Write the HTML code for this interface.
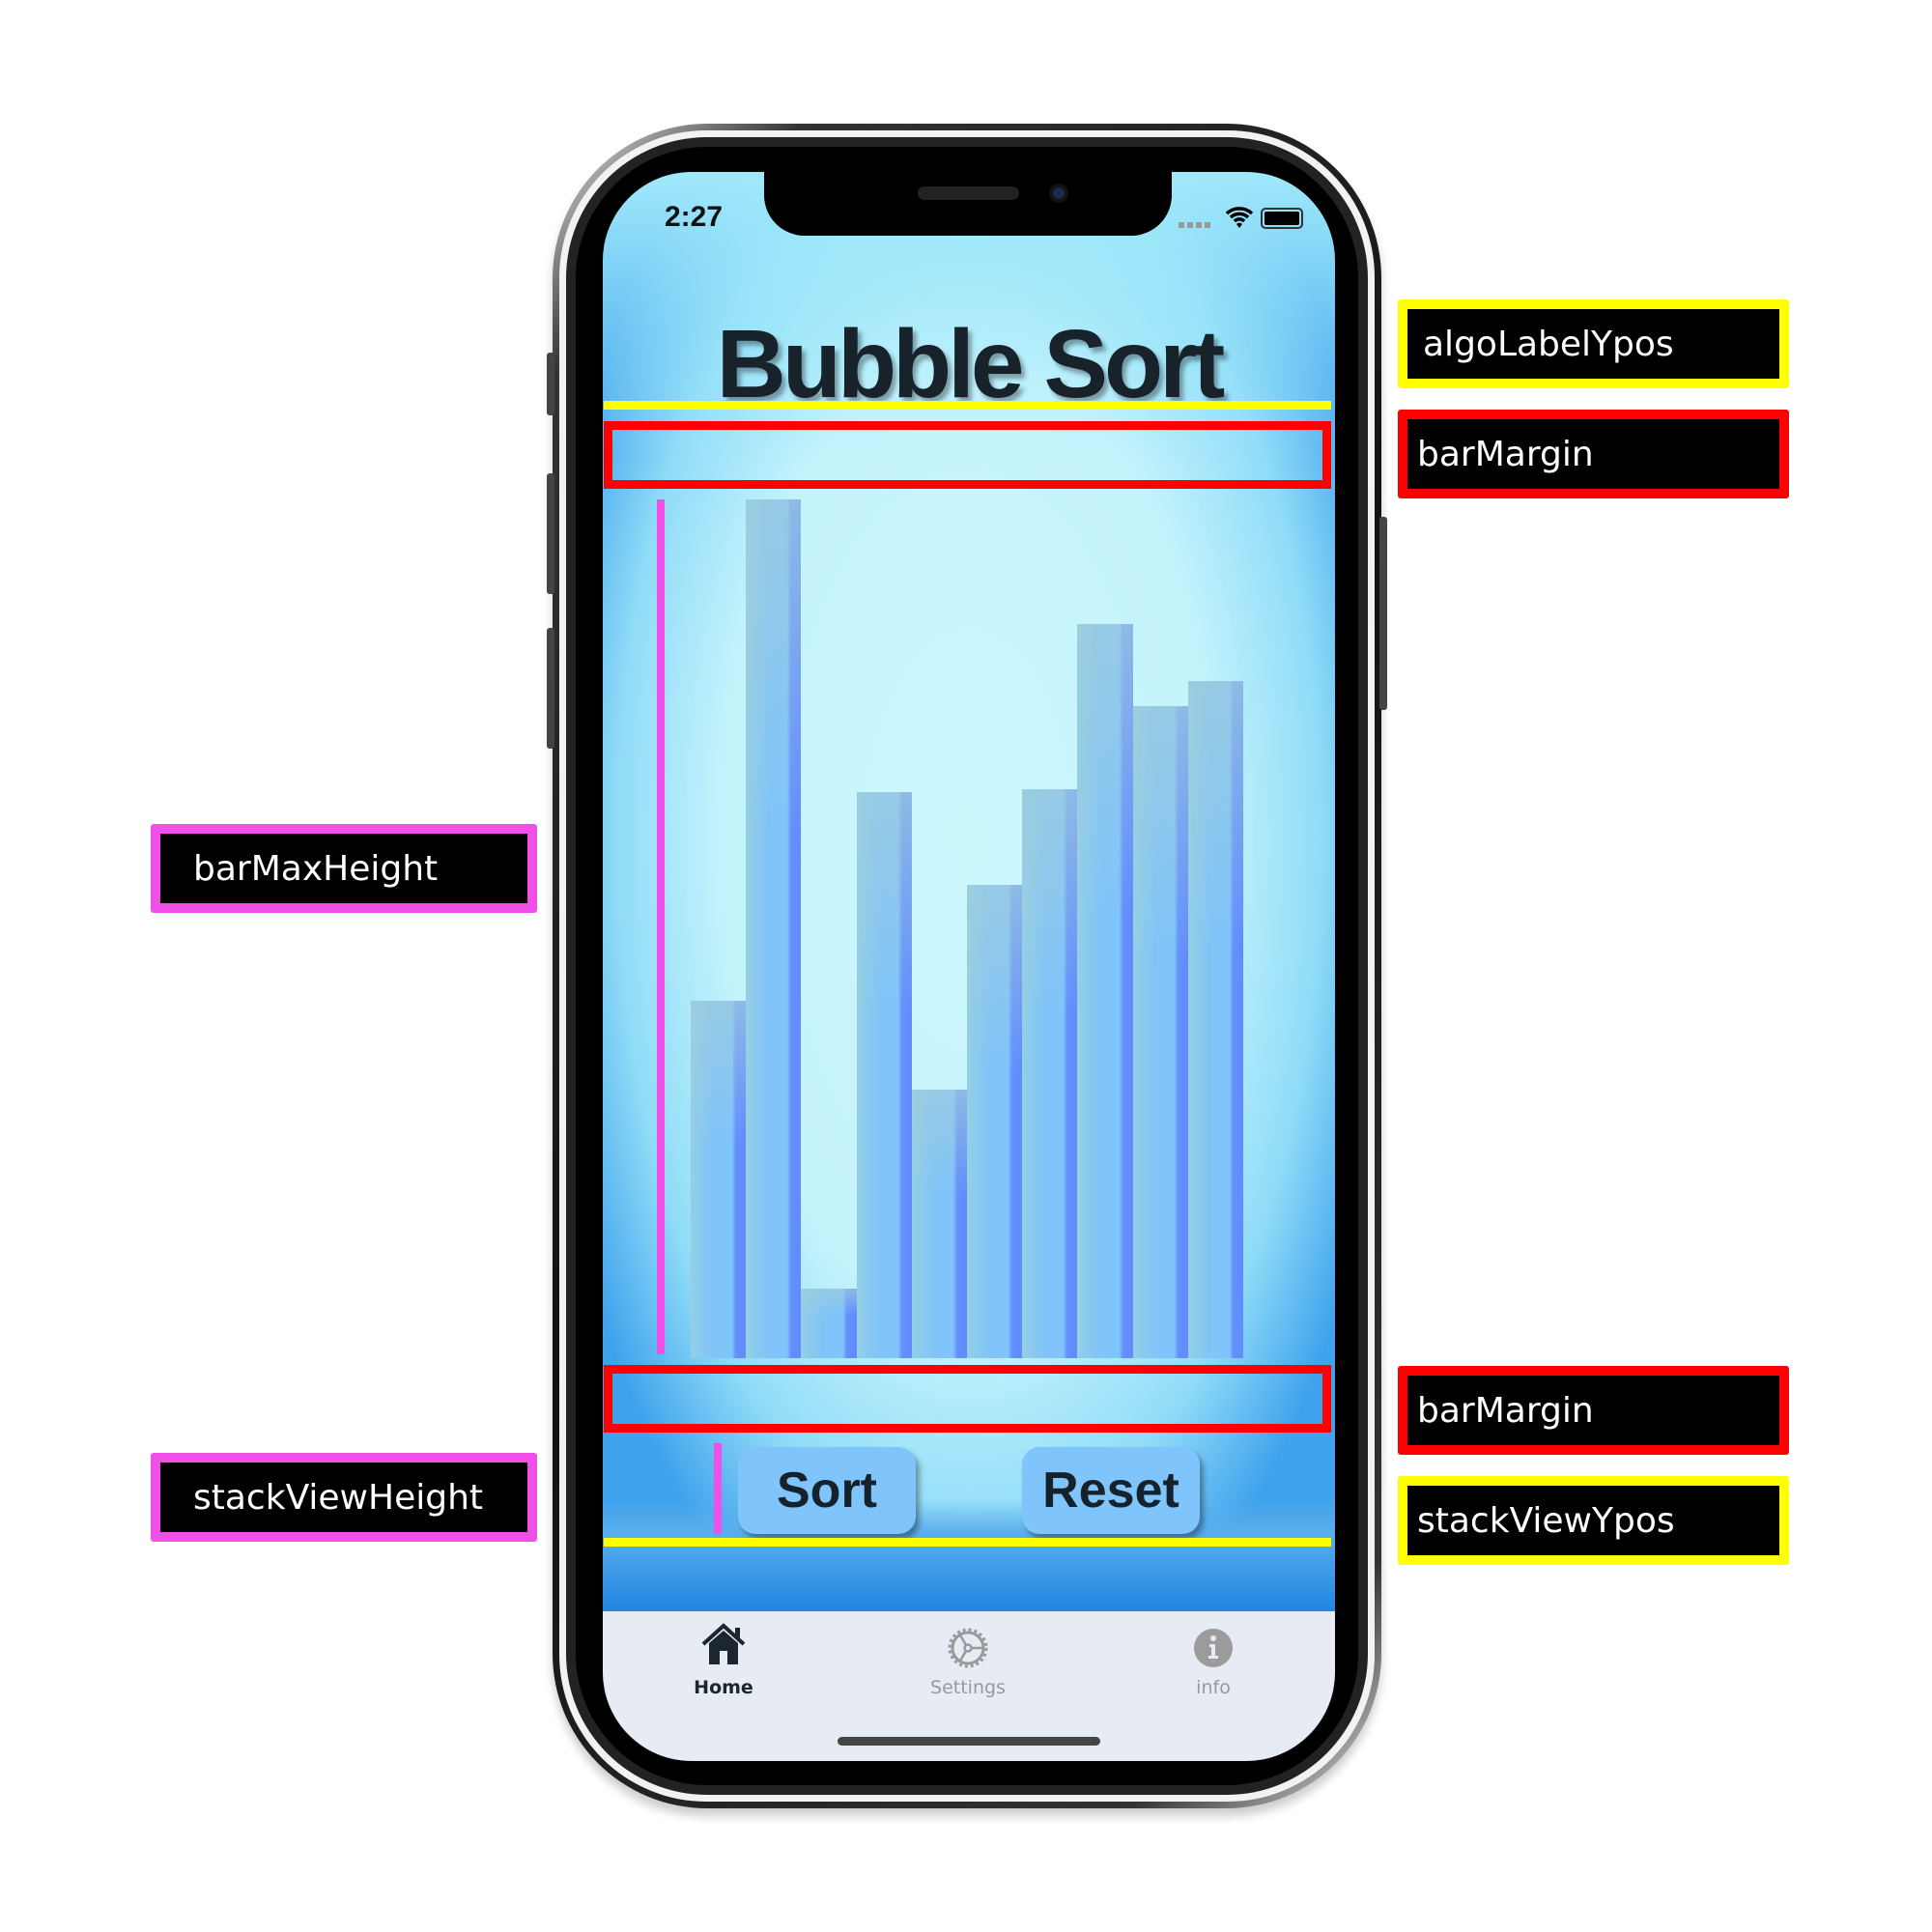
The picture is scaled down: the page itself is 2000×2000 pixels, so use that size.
<!DOCTYPE html>
<html><head><meta charset="utf-8"><style>
*{margin:0;padding:0;box-sizing:border-box}
body{width:2000px;height:2000px;background:#fff;position:relative;overflow:hidden;font-family:"Liberation Sans",sans-serif}
.a{position:absolute}
.lbl{position:absolute;background:#000;color:#fff;font-family:"DejaVu Sans","Liberation Sans",sans-serif;font-size:36px;border:10px solid;padding-left:16px;display:flex;align-items:center;border-radius:3px}
.bar{position:absolute;bottom:0;width:57.2px;background:linear-gradient(90deg,#94cfe4 0%,#80c4f8 40%,#7fc4fb 75%,#6590fd 82%,#5f8bfd 100%)}
.bar::before{content:"";position:absolute;left:0;right:0;top:0;height:40%;background:linear-gradient(180deg,rgba(160,205,220,.7),rgba(160,205,220,0))}
.btn{position:absolute;top:1498px;width:184px;height:90px;background:#7fc4fb;border-radius:18px;box-shadow:4px 5px 6px rgba(0,0,0,.35);font-size:52px;font-weight:bold;color:#15222c;display:flex;align-items:center;justify-content:center}
.tab{position:absolute;top:1736px;font-size:19px;font-family:"DejaVu Sans",sans-serif;transform:translateX(-50%)}
</style></head><body>
<div class="a" style="left:572px;top:128px;width:858px;height:1744px;border-radius:160px;background:linear-gradient(135deg,#e8e8e8,#333 10%,#111 50%,#333 90%,#ddd);box-shadow:0 8px 10px rgba(0,0,0,.2)"></div>
<div class="a" style="left:579px;top:135px;width:844px;height:1730px;border-radius:152px;background:#f2f2f2"></div>
<div class="a" style="left:586px;top:142px;width:830px;height:1716px;border-radius:146px;background:#222"></div>
<div class="a" style="left:596px;top:152px;width:810px;height:1696px;border-radius:136px;background:#000"></div>
<div class="a" style="left:566px;top:365px;width:8px;height:65px;background:#444;border-radius:3px"></div>
<div class="a" style="left:566px;top:490px;width:8px;height:125px;background:#444;border-radius:3px"></div>
<div class="a" style="left:566px;top:650px;width:8px;height:125px;background:#444;border-radius:3px"></div>
<div class="a" style="left:1428px;top:535px;width:8px;height:200px;background:#444;border-radius:3px"></div>
<div class="a" style="left:624px;top:178px;width:758px;height:1645px;border-radius:92px;overflow:hidden;background:radial-gradient(ellipse 60% 55% at 50% 42%,#ccf7fd 0%,#c6f4fc 55%,#90dcf8 80%,#3fa2ec 100%)">
  <div class="a" style="left:0;top:0;width:758px;height:300px;background:linear-gradient(180deg,#a0e9fb,rgba(190,243,252,0))"></div>
  <div class="a" style="left:0;top:1375px;width:758px;height:115px;background:linear-gradient(180deg,rgba(30,136,229,0),#5aaeed 30%,#2185e0 100%)"></div>
  <div class="a" style="left:0;top:1490px;width:758px;height:160px;background:#e7ebf3"></div>
  <div class="a" style="left:243px;top:1620px;width:272px;height:9px;border-radius:5px;background:#444"></div>
</div>
<div class="a" style="left:791px;top:168px;width:422px;height:76px;background:#000;border-radius:0 0 42px 42px"></div>
<div class="a" style="left:950px;top:193px;width:105px;height:14px;background:#222;border-radius:7px"></div>
<div class="a" style="left:1086px;top:190px;width:20px;height:20px;background:#1a2c4a;border-radius:50%;border:4px solid #111"></div>
<div class="a" style="left:688px;top:208px;font-size:30px;font-weight:bold;color:#111">2:27</div>
<div class="a" style="left:1220px;top:230px;width:36px;height:6px;background:repeating-linear-gradient(90deg,#999 0 6px,transparent 6px 9px)"></div>
<svg class="a" style="left:1268px;top:212px" width="30" height="26" viewBox="0 0 30 26"><path d="M2 9a19 19 0 0 1 26 0M6 13a13 13 0 0 1 18 0M10 17a7 7 0 0 1 10 0" stroke="#000" stroke-width="3.5" fill="none"/><path d="M12 20l3 4 3-4a4 4 0 0 0-6 0z" fill="#000"/></svg>
<div class="a" style="left:1305px;top:215px;width:44px;height:22px;border:2px solid #333;border-radius:5px;padding:2px"><div style="width:100%;height:100%;background:#000;border-radius:2px"></div></div>
<div class="a" style="left:624px;top:320px;width:758px;text-align:center;font-size:100px;font-weight:bold;color:#17222b;letter-spacing:-4px;text-shadow:4px 5px 5px rgba(0,0,0,.35)">Bubble Sort</div>
<div class="a" style="left:625px;top:415px;width:753px;height:9px;background:#ff0"></div>
<div class="a" style="left:625px;top:436px;width:753px;height:70px;border:9px solid #f00"></div>
<div class="a" style="left:680px;top:517px;width:8px;height:885px;background:#f050e8"></div>
<div class="a" style="left:715px;top:0;width:580px;height:1406px">
 <div class="bar" style="left:0;height:370px"></div>
 <div class="bar" style="left:57.2px;height:889px"></div>
 <div class="bar" style="left:114.4px;height:72px"></div>
 <div class="bar" style="left:171.6px;height:586px"></div>
 <div class="bar" style="left:228.8px;height:278px"></div>
 <div class="bar" style="left:286px;height:490px"></div>
 <div class="bar" style="left:343.2px;height:589px"></div>
 <div class="bar" style="left:400.4px;height:760px"></div>
 <div class="bar" style="left:457.6px;height:675px"></div>
 <div class="bar" style="left:514.8px;height:701px"></div>
</div>
<div class="a" style="left:625px;top:1413px;width:753px;height:70px;border:9px solid #f00"></div>
<div class="a" style="left:739px;top:1494px;width:8px;height:94px;background:#f050e8"></div>
<div class="btn" style="left:764px">Sort</div>
<div class="btn" style="left:1058px">Reset</div>
<div class="a" style="left:625px;top:1592px;width:753px;height:9px;background:#ff0"></div>
<svg class="a" style="left:725px;top:1680px" width="48" height="44" viewBox="0 0 48 44"><path d="M3 22L24 3l21 19" stroke="#1b2630" stroke-width="4" fill="none"/><path d="M36 5h5v12l-5-5z" fill="#1b2630"/><path d="M9 21L24 8l15 13v22H9z" fill="#1b2630"/><rect x="20" y="29" width="8" height="14" fill="#e7ebf3"/></svg>
<div class="tab" style="left:749px;color:#1b2630;font-weight:bold">Home</div>
<svg class="a" style="left:980px;top:1684px" width="44" height="44" viewBox="0 0 44 44"><circle cx="22" cy="22" r="16" stroke="#999" stroke-width="3" fill="none"/><circle cx="22" cy="22" r="19" stroke="#999" stroke-width="3" fill="none" stroke-dasharray="3 3"/><circle cx="22" cy="22" r="3.5" stroke="#999" stroke-width="2.5" fill="none"/><path d="M25 22h13M20 19l-7-12M20 25l-7 12" stroke="#999" stroke-width="2.5"/></svg>
<div class="tab" style="left:1002px;color:#999">Settings</div>
<svg class="a" style="left:1236px;top:1686px" width="40" height="40" viewBox="0 0 40 40"><circle cx="20" cy="20" r="20" fill="#9b9b9b"/><circle cx="20" cy="10" r="3" fill="#e7ebf3"/><path d="M16 16h6v12h3v3H15v-3h3v-9h-2z" fill="#e7ebf3"/></svg>
<div class="tab" style="left:1256px;color:#999">info</div>
<div class="lbl" style="left:1447px;top:310px;width:405px;height:92px;border-color:#ff0">algoLabelYpos</div>
<div class="lbl" style="left:1447px;top:424px;width:405px;height:92px;border-color:#f00;padding-left:10px">barMargin</div>
<div class="lbl" style="left:1447px;top:1414px;width:405px;height:92px;border-color:#f00;padding-left:10px">barMargin</div>
<div class="lbl" style="left:1447px;top:1528px;width:405px;height:92px;border-color:#ff0;padding-left:10px">stackViewYpos</div>
<div class="lbl" style="left:156px;top:853px;width:400px;height:92px;border-color:#f050e8;padding-left:34px">barMaxHeight</div>
<div class="lbl" style="left:156px;top:1504px;width:400px;height:92px;border-color:#f050e8;padding-left:34px">stackViewHeight</div>
</body></html>
